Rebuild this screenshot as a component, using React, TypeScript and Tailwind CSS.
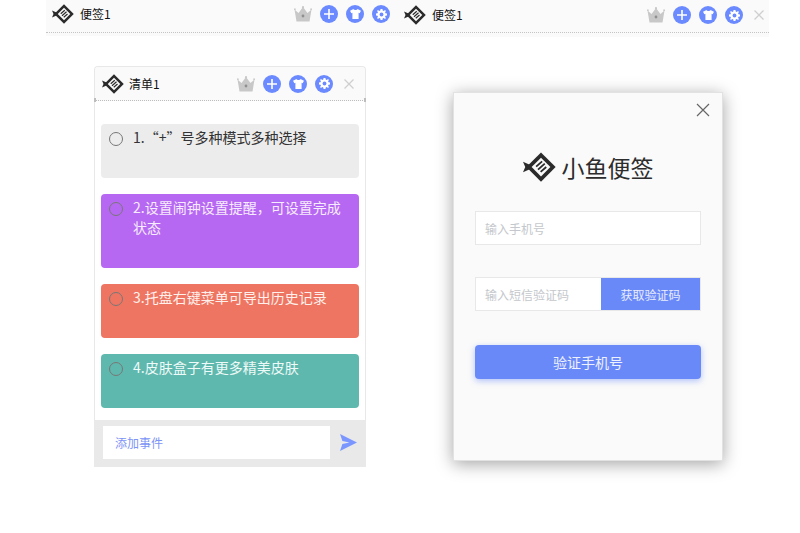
import React from 'react';

const FONT = "font-['Microsoft_YaHei','Noto_Sans_CJK_SC','Noto_Sans',sans-serif]";

function FishLogo({ className }: { className: string }) {
  return (
    <svg viewBox="0 0 44 40" className={className}>
      {/* tail */}
      <path d="M0 13 L9 17 L9 23 L0 27 L3 20 Z" fill="#2b2b2b" />
      {/* body */}
      <path d="M24 0.5 L43.5 20 L24 39.5 L4.5 20 Z" fill="#2b2b2b" />
      <path d="M24 7.5 L36.5 20 L24 32.5 L11.5 20 Z" fill="#fafafa" />
      <path d="M17.5 19.5 L25.5 12.5 M20 23.5 L29 15.5 M23.5 26.5 L31 20" stroke="#2b2b2b" strokeWidth="2.4" fill="none" />
    </svg>
  );
}

function Crown() {
  return (
    <svg viewBox="0 0 18 16" className="w-[18px] h-4">
      <path d="M0.5 3.5 L4.5 7 L9 1 L13.5 7 L17.5 3.5 L15.5 15.5 L2.5 15.5 Z" fill="#c8c8c8" />
      <circle cx="9" cy="1.2" r="1.1" fill="#c8c8c8" />
      <circle cx="0.9" cy="3.2" r="0.9" fill="#c8c8c8" />
      <circle cx="17.1" cy="3.2" r="0.9" fill="#c8c8c8" />
      <circle cx="9" cy="10" r="1.4" fill="#8f8f8f" />
    </svg>
  );
}

function RoundIcon({ children }: { children: React.ReactNode }) {
  return (
    <div className="w-[18px] h-[18px] rounded-full bg-[#6b8aff] flex items-center justify-center">
      {children}
    </div>
  );
}

function HeaderIcons({ close }: { close: boolean }) {
  return (
    <div className="flex items-center gap-2">
      <Crown />
      <RoundIcon>
        <svg viewBox="0 0 10 10" className="w-[10px] h-[10px]">
          <path d="M5 0 V10 M0 5 H10" stroke="#fff" strokeWidth="1.6" />
        </svg>
      </RoundIcon>
      <RoundIcon>
        <svg viewBox="0 0 12 11" className="w-[11px] h-[10px]">
          <path d="M3.8 0 C4.4 1.4 7.6 1.4 8.2 0 L12 2 L10.6 4.8 L9.4 4.2 L9.4 11 L2.6 11 L2.6 4.2 L1.4 4.8 L0 2 Z" fill="#fff" />
        </svg>
      </RoundIcon>
      <RoundIcon>
        <svg viewBox="0 0 24 24" className="w-[11px] h-[11px]">
          <path
            d="M10 0 H14 L14.7 3.3 L16.9 4.2 L19.8 2.4 L21.6 4.2 L19.8 7.1 L20.7 9.3 L24 10 V14 L20.7 14.7 L19.8 16.9 L21.6 19.8 L19.8 21.6 L16.9 19.8 L14.7 20.7 L14 24 H10 L9.3 20.7 L7.1 19.8 L4.2 21.6 L2.4 19.8 L4.2 16.9 L3.3 14.7 L0 14 V10 L3.3 9.3 L4.2 7.1 L2.4 4.2 L4.2 2.4 L7.1 4.2 L9.3 3.3 Z"
            fill="#fff"
          />
          <circle cx="12" cy="12" r="4.2" fill="#6b8aff" />
        </svg>
      </RoundIcon>
      {close && (
        <svg viewBox="0 0 10 10" className="w-[10px] h-[10px] ml-[3px]">
          <path d="M0.5 0.5 L9.5 9.5 M9.5 0.5 L0.5 9.5" stroke="#cfcfcf" strokeWidth="1.3" />
        </svg>
      )}
    </div>
  );
}

const todos = [
  { text: '1.“+”号多种模式多种选择', bg: 'bg-[#ececec] h-[54px] text-[#333]' },
  { text: '2.设置闹钟设置提醒，可设置完成状态', bg: 'bg-[#b768f2] h-[74px] text-[#f6ecff]' },
  { text: '3.托盘右键菜单可导出历史记录', bg: 'bg-[#ee7561] h-[54px] text-[#fff0ec]' },
  { text: '4.皮肤盒子有更多精美皮肤', bg: 'bg-[#5fb8ae] h-[54px] text-[#eefaf8]' },
];

export default function App() {
  return (
    <div className={`relative w-[800px] h-[533px] bg-white overflow-hidden ${FONT}`}>
      {/* left note window, cut at the top */}
      <div className="absolute left-[46px] top-0 w-[354px] h-[36px] bg-[#fafafa]">
        <div className="h-[33px] pl-[6px] pr-[10px] pb-1 flex items-center justify-between border-b border-dotted border-[#c4c4c4]">
          <div className="flex items-center gap-[6px]">
            <FishLogo className="w-[22px] h-5" />
            <span className="text-xs text-[#111]">便签1</span>
          </div>
          <HeaderIcons close={false} />
        </div>
      </div>

      {/* right note window */}
      <div className="absolute left-[400px] top-0 w-[369px] h-[37px] bg-[#fafafa]">
        <div className="h-[33px] pl-1 pr-[5px] pb-[2px] flex items-center justify-between border-b border-dotted border-[#c4c4c4]">
          <div className="flex items-center gap-[6px]">
            <FishLogo className="w-[22px] h-5" />
            <span className="text-xs text-[#111]">便签1</span>
          </div>
          <HeaderIcons close />
        </div>
      </div>

      {/* todo list window */}
      <div className="absolute left-[94px] top-[66px] w-[272px] h-[401px] flex flex-col bg-white border-x border-t border-[#e8e8e8] rounded-t-[4px]">
        <div className="relative h-[34px] shrink-0 pl-[7px] pr-[11px] flex items-center justify-between bg-[#fafafa] border-b border-dotted border-[#bdbdbd] rounded-t-[4px]">
          <div className="flex items-center gap-[5px]">
            <FishLogo className="w-[22px] h-5" />
            <span className="text-xs text-[#111]">清单1</span>
          </div>
          <HeaderIcons close />
          <div className="absolute -left-[1px] -bottom-[2px] w-[2px] h-[4px] bg-[#bdbdbd]" />
          <div className="absolute -right-[1px] -bottom-[2px] w-[2px] h-[4px] bg-[#bdbdbd]" />
        </div>
        <div className="flex-1 px-[6px] pt-[23px] flex flex-col gap-4">
          {todos.map((t) => (
            <div key={t.text} className={`${t.bg} rounded-[4px] flex pt-[3px] pl-[8px] pr-[16px] gap-[10px] text-sm leading-5`}>
              <div className="w-[14px] h-[14px] shrink-0 mt-[5px] rounded-full border-[1.5px] border-[#777]" />
              <div>{t.text}</div>
            </div>
          ))}
        </div>
        <div className="h-[47px] shrink-0 -mx-px bg-[#e9e9e9] flex items-start pt-[6px] pl-[9px]">
          <div className="w-[227px] h-[33px] bg-white pl-3 pt-px flex items-center text-xs text-[#7d93f5]">添加事件</div>
          <svg viewBox="0 0 18 18" className="w-[17px] h-[17px] ml-[10px] mt-[8px]">
            <path d="M0 0 L18 9 L0 18 L2.5 10.5 L10 9 L2.5 7.5 Z" fill="#7b97ff" />
          </svg>
        </div>
      </div>

      {/* verify phone dialog */}
      <div className="absolute left-[453px] top-[92px] w-[270px] h-[369px] bg-[#fafafa] border border-[#e2e2e2] shadow-[0_3px_16px_rgba(0,0,0,0.36)] px-[21px]">
        <svg viewBox="0 0 14 14" className="absolute right-[12px] top-[10px] w-[14px] h-[14px]">
          <path d="M1 1 L13 13 M13 1 L1 13" stroke="#666" strokeWidth="1.2" />
        </svg>
        <div className="h-[118px] pt-[58px] flex justify-center">
          <div className="flex items-center h-8 gap-[6px]">
            <FishLogo className="w-[33px] h-[32px]" />
            <span className="text-[23px] leading-8 text-[#2d2d2d] whitespace-nowrap">小鱼便签</span>
          </div>
        </div>
        <div className="h-[34px] bg-white border border-[#e8e8e8] pl-[9px] pt-px flex items-center text-xs text-[#c4c7cc]">输入手机号</div>
        <div className="mt-[32px] h-[34px] flex w-[226px] bg-white border border-[#e8e8e8]">
          <div className="w-[125px] pl-[9px] pt-px flex items-center text-xs text-[#c4c7cc]">输入短信验证码</div>
          <div className="w-[99px] pt-px bg-[#6a89f9] flex items-center justify-center text-xs text-[#e8edff]">获取验证码</div>
        </div>
        <div className="mt-[34px] h-[34px] pb-px rounded-[4px] bg-[#6a89f9] shadow-[0_2px_6px_rgba(106,137,249,0.5)] flex items-center justify-center text-sm text-[#eef1ff]">
          验证手机号
        </div>
      </div>
    </div>
  );
}
